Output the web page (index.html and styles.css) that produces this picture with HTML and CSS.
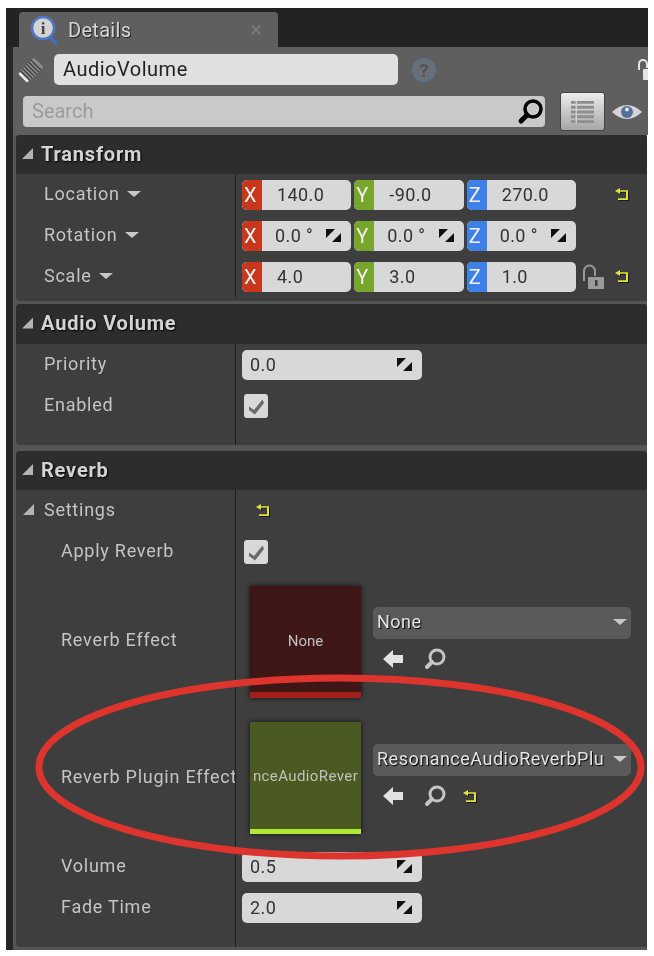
FILE: index.html
```html
<!DOCTYPE html>
<html>
    <head>
        <meta charset="UTF-8">
        <title>Details</title>
        <link rel="stylesheet" href="styles.css">
    </head>

    <body>
        <svg class="defs" width="0" height="0">
            <symbol id="reset" viewBox="0 0 14 13">
                <path d="M0 3 L5 0 V2.2 H13 V12 H3 V10.2 H11 V3.8 H5 V6 Z" fill="#000" opacity=".6" transform="translate(1 1)"/>
                <path d="M0 3 L5 0 V2.2 H13 V12 H3 V10.2 H11 V3.8 H5 V6 Z" fill="#e0e23c"/>
            </symbol>
            <symbol id="spin" viewBox="0 0 15 15">
                <path d="M0 1 H9 L0 10 Z M15 5 V14 H6 Z" fill="#111"/>
            </symbol>
            <symbol id="check" viewBox="0 0 24 24">
                <path d="M5 12.5 L10 16 L18.5 5.5 L20 9 L11 20.5 L5 16 Z" fill="#6a6a6a"/>
            </symbol>
            <symbol id="back" viewBox="0 0 22 20">
                <path d="M1 10 L11 1 V6 H21 V14 H11 V19 Z" fill="#e2e2e2"/>
            </symbol>
            <symbol id="find" viewBox="0 0 22 22">
                <circle cx="13" cy="9" r="7" fill="none" stroke="#c4c4c4" stroke-width="3"/>
                <path d="M8 14 L3 19" stroke="#c4c4c4" stroke-width="4" stroke-linecap="round"/>
            </symbol>
        </svg>

        <div class="panel">
            <div class="tabstrip">
                <div class="tab">
                    <svg class="tab_icon" viewBox="0 0 28 30">
                        <path d="M19 21 L26 28" stroke="#3f6fc0" stroke-width="3.5" stroke-linecap="round"/>
                        <circle cx="13" cy="13" r="11" fill="#d4d4d4" stroke="#4f78c4" stroke-width="2.5"/>
                        <text x="13" y="19" class="tab_icon_i">i</text>
                    </svg>
                    <span class="tab_title">Details</span>
                    <span class="tab_close">×</span>
                </div>
            </div>

            <div class="main">
                <div class="toolbar">
                    <div class="name_row">
                        <svg class="actor_icon" viewBox="0 0 28 28">
                            <g transform="rotate(-45 14 14)">
                                <rect x="3" y="7" width="22" height="14" rx="3" fill="#8a8a8a"/>
                                <path d="M6 7 V21 M9 7 V21 M12 7 V21 M15 7 V21 M18 7 V21 M21 7 V21" stroke="#3a3a3a" stroke-width="1.2"/>
                                <path d="M3.5 8 V20" stroke="#f0f0f0" stroke-width="2.5"/>
                            </g>
                        </svg>
                        <div class="name_input">AudioVolume</div>
                        <div class="help">?</div>
                        <svg class="top_lock" viewBox="0 0 16 24">
                            <path d="M2 12 V6 A4 4 0 0 1 10 6 V10" fill="none" stroke="#e4e4e4" stroke-width="2"/>
                            <rect x="6" y="11" width="10" height="11" rx="1" fill="#e4e4e4"/>
                        </svg>
                    </div>
                    <div class="search_row">
                        <div class="search">
                            <span class="search_text">Search</span>
                            <svg class="search_icon" viewBox="0 0 28 28">
                                <circle cx="16" cy="11" r="8" fill="none" stroke="#000" stroke-width="3.5"/>
                                <path d="M10 17 L4 23" stroke="#000" stroke-width="5" stroke-linecap="round"/>
                            </svg>
                        </div>
                        <div class="grid_btn">
                            <svg class="grid_icon" viewBox="0 0 24 24">
                                <path d="M0 2 H24 M0 7 H24 M0 12 H24 M0 17 H24 M0 22 H24" stroke="#8e8e8e" stroke-width="3"/>
                                <path d="M5.5 0 V24" stroke="#d0d0d0" stroke-width="1.5"/>
                            </svg>
                        </div>
                        <svg class="eye" viewBox="0 0 30 22">
                            <path d="M0 11 Q15 -3 30 11 Q15 25 0 11 Z" fill="#d4d4d4"/>
                            <circle cx="15" cy="11" r="6" fill="#56709c"/>
                            <circle cx="15" cy="8.5" r="2" fill="#dfe6f0"/>
                        </svg>
                    </div>
                </div>

                <div class="sections">
                    <div class="section section_transform">
                        <div class="section_head"><i class="corner"></i>Transform</div>
                        <div class="row">
                            <div class="name name_menu">Location<i class="caret"></i></div>
                            <div class="value">
                                <div class="vec">
                                    <div class="axis axis_x"><b>X</b><span class="num">140.0</span></div>
                                    <div class="axis axis_y"><b>Y</b><span class="num">-90.0</span></div>
                                    <div class="axis axis_z"><b>Z</b><span class="num">270.0</span></div>
                                </div>
                                <svg class="reset reset_vec"><use href="#reset"/></svg>
                            </div>
                        </div>
                        <div class="row">
                            <div class="name name_menu">Rotation<i class="caret"></i></div>
                            <div class="value">
                                <div class="vec">
                                    <div class="axis axis_x"><b>X</b><span class="num num_deg">0.0 °</span><svg class="spin"><use href="#spin"/></svg></div>
                                    <div class="axis axis_y"><b>Y</b><span class="num num_deg">0.0 °</span><svg class="spin"><use href="#spin"/></svg></div>
                                    <div class="axis axis_z"><b>Z</b><span class="num num_deg">0.0 °</span><svg class="spin"><use href="#spin"/></svg></div>
                                </div>
                            </div>
                        </div>
                        <div class="row">
                            <div class="name name_menu">Scale<i class="caret"></i></div>
                            <div class="value">
                                <div class="vec">
                                    <div class="axis axis_x"><b>X</b><span class="num">4.0</span></div>
                                    <div class="axis axis_y"><b>Y</b><span class="num">3.0</span></div>
                                    <div class="axis axis_z"><b>Z</b><span class="num">1.0</span></div>
                                </div>
                                <svg class="scale_lock" viewBox="0 0 22 26">
                                    <path d="M2 17 V7 A5.5 5.5 0 0 1 13 7 V12" fill="none" stroke="#9a9a9a" stroke-width="2"/>
                                    <rect x="6" y="13" width="16" height="12" rx="1" fill="#9a9a9a"/>
                                    <rect x="13" y="16" width="2.5" height="6" fill="#3e3e3e"/>
                                </svg>
                                <svg class="reset reset_scale"><use href="#reset"/></svg>
                            </div>
                        </div>
                        <div class="section_end"></div>
                    </div>

                    <div class="section section_audio">
                        <div class="section_head"><i class="corner"></i>Audio Volume</div>
                        <div class="row">
                            <div class="name">Priority</div>
                            <div class="value"><div class="single">0.0<svg class="spin"><use href="#spin"/></svg></div></div>
                        </div>
                        <div class="row">
                            <div class="name">Enabled</div>
                            <div class="value"><svg class="check"><use href="#check"/></svg></div>
                        </div>
                        <div class="section_end section_end_tall"></div>
                    </div>

                    <div class="section section_last">
                        <div class="section_head"><i class="corner"></i>Reverb</div>
                        <div class="row">
                            <div class="name"><i class="corner corner_small"></i>Settings</div>
                            <div class="value"><svg class="reset reset_settings"><use href="#reset"/></svg></div>
                        </div>
                        <div class="row">
                            <div class="name name_sub">Apply Reverb</div>
                            <div class="value"><svg class="check"><use href="#check"/></svg></div>
                        </div>
                        <div class="row row_asset">
                            <div class="name name_sub">Reverb Effect</div>
                            <div class="value">
                                <div class="thumb thumb_none"><span>None</span></div>
                                <div class="asset_side">
                                    <div class="combo"><span>None</span><i class="caret"></i></div>
                                    <div class="asset_tools">
                                        <svg class="tool_back"><use href="#back"/></svg>
                                        <svg class="tool_find"><use href="#find"/></svg>
                                    </div>
                                </div>
                            </div>
                        </div>
                        <div class="row row_asset row_asset_tall">
                            <div class="name name_sub">Reverb Plugin Effect</div>
                            <div class="value">
                                <div class="thumb thumb_plugin"><span>nceAudioRever</span></div>
                                <div class="asset_side">
                                    <div class="combo"><span>ResonanceAudioReverbPlu</span><i class="caret"></i></div>
                                    <div class="asset_tools">
                                        <svg class="tool_back"><use href="#back"/></svg>
                                        <svg class="tool_find"><use href="#find"/></svg>
                                        <svg class="reset reset_tool"><use href="#reset"/></svg>
                                    </div>
                                </div>
                            </div>
                        </div>
                        <div class="row">
                            <div class="name name_sub">Volume</div>
                            <div class="value"><div class="single">0.5<svg class="spin"><use href="#spin"/></svg></div></div>
                        </div>
                        <div class="row">
                            <div class="name name_sub">Fade Time</div>
                            <div class="value"><div class="single">2.0<svg class="spin"><use href="#spin"/></svg></div></div>
                        </div>
                        <div class="section_end section_end_tall"></div>
                    </div>
                </div>
            </div>
        </div>

        <!-- red marker drawn over the screenshot -->
        <svg class="marker" width="654" height="956">
            <ellipse cx="340" cy="767" rx="301" ry="89" fill="none" stroke="#dd352e" stroke-width="7"/>
        </svg>
    </body>
</html>
```

FILE: styles.css
```css
* {
    box-sizing: border-box;
}
body {
    margin: 0;
    background: #fff;
    font-family: Roboto, 'Liberation Sans', sans-serif;
}
.defs {
    position: absolute;
}
.panel {
    width: 642px;
    height: 942px;
    margin: 8px 0 0 6px;
    overflow: hidden;
    filter: blur(0.5px);
}
.tabstrip {
    height: 39px;
    padding: 4px 0 0 13px;
    background: #232323;
}
.tab {
    display: flex;
    align-items: center;
    width: 259px;
    height: 35px;
    padding: 0 16px 0 11px;
    background: #5f5f5f;
    border-radius: 4px 4px 0 0;
}
.tab_icon {
    width: 28px;
    height: 30px;
}
.tab_icon_i {
    font-family: 'Liberation Serif', serif;
    font-size: 17px;
    font-weight: bold;
    fill: #444;
    text-anchor: middle;
}
.tab_title {
    margin-left: 10px;
    font-size: 20px;
    letter-spacing: 0.3px;
    color: #d6d6d6;
    text-shadow: 1px 1px 1px #222;
}
.tab_close {
    margin-left: auto;
    font-size: 22px;
    color: #7c7c7c;
}
.main {
    border-left: 7px solid #262626;
}
.toolbar {
    height: 88px;
    padding-top: 7px;
    background: #5f5f5f;
}
.name_row {
    display: flex;
    align-items: center;
    height: 31px;
}
.actor_icon {
    flex: none;
    width: 28px;
    height: 28px;
    margin-left: 4px;
}
.name_input {
    flex: none;
    width: 344px;
    height: 31px;
    margin-left: 9px;
    padding-left: 9px;
    font-size: 20px;
    letter-spacing: 0.5px;
    line-height: 31px;
    color: #222;
    background: #e0e0e0;
    border-radius: 5px;
}
.help {
    flex: none;
    width: 24px;
    height: 24px;
    margin-left: 14px;
    font-size: 19px;
    font-weight: bold;
    line-height: 21px;
    text-align: center;
    color: #4f5358;
    background: #6b6f75;
    border: 2px solid #5e7189;
    border-radius: 50%;
}
.top_lock {
    flex: none;
    width: 16px;
    height: 24px;
    margin-left: 201px;
}
.search_row {
    display: flex;
    align-items: center;
    height: 39px;
    margin-top: 7px;
    padding-left: 10px;
}
.search {
    display: flex;
    align-items: center;
    justify-content: space-between;
    width: 522px;
    height: 31px;
    padding-left: 9px;
    font-size: 20px;
    color: #9c9c9c;
    background: #c9c9c9;
    border-radius: 4px;
}
.search_text {
    padding-bottom: 2px;
}
.search_icon {
    width: 28px;
    height: 28px;
}
.grid_btn {
    display: flex;
    align-items: center;
    justify-content: center;
    width: 45px;
    height: 39px;
    margin-left: 15px;
    background: linear-gradient(#ececec, #a6a6a6);
    border: 1px solid #444;
    border-radius: 3px;
}
.grid_icon {
    width: 23px;
    height: 24px;
}
.eye {
    width: 30px;
    height: 22px;
    margin-left: 7px;
}
.sections {
    margin-right: 1px;
    padding: 0 0 3px 3px;
    background: #555;
}
.section {
    margin-bottom: 6px;
    background: #3e3e3e;
    border-radius: 4px 4px 0 4px;
}
.section_transform {
    margin-bottom: 3px;
}
.section_last {
    margin-bottom: 0;
}
.section_head {
    display: flex;
    align-items: center;
    height: 39px;
    padding-bottom: 2px;
    font-size: 20px;
    font-weight: bold;
    letter-spacing: 0.8px;
    color: #d4d4d4;
    text-shadow: 1px 1px 2px #000;
    background: #2d2d2d;
    border-radius: 4px 4px 0 0;
}
.section_audio .section_head {
    height: 40px;
}
.corner {
    flex: none;
    width: 11px;
    height: 11px;
    margin: 0 8px 0 6px;
    background: #b4b4b4;
    clip-path: polygon(100% 0, 100% 100%, 0 100%);
}
.corner_small {
    margin: 0 10px 0 7px;
}
.section_end {
    height: 4px;
}
.section_end_tall {
    height: 19px;
    margin-left: 219px;
    border-left: 1px solid #1e1e1e;
}
.row {
    display: flex;
    height: 41px;
}
.row_asset {
    height: 136px;
}
.row_asset_tall {
    height: 138px;
}
.name {
    display: flex;
    align-items: center;
    flex: none;
    width: 219px;
    padding: 0 0 2px 28px;
    font-size: 18px;
    letter-spacing: 0.75px;
    white-space: nowrap;
    color: #c4c4c4;
}
.name:has(.corner_small) {
    padding-left: 0;
}
.name_sub {
    padding-left: 45px;
}
.caret {
    flex: none;
    width: 0;
    height: 0;
    margin-left: 7px;
    border-left: 7px solid transparent;
    border-right: 7px solid transparent;
    border-top: 6px solid #c8c8c8;
}
.value {
    display: flex;
    align-items: center;
    flex: 1;
    padding-left: 6px;
    border-left: 1px solid #1e1e1e;
}
.vec {
    display: flex;
    gap: 3px;
    width: 334px;
}
.axis {
    display: flex;
    flex: 1;
    height: 30px;
    border-radius: 5px;
    overflow: hidden;
    align-items: center;
    font-size: 18px;
    letter-spacing: 0.4px;
    color: #333;
    background: #d8d8d8;
}
.axis b {
    flex: none;
    width: 20px;
    height: 100%;
    padding-left: 2px;
    font-size: 20px;
    font-weight: normal;
    line-height: 30px;
    color: #f2f2f2;
    border-radius: 5px 0 0 5px;
}
.axis_x b {
    background: #c8361b;
}
.axis_y b {
    background: #78a52c;
}
.axis_z b {
    background: #3d80e8;
}
.num {
    margin-left: 15px;
}
.num_deg {
    margin-left: 13px;
}
.spin {
    flex: none;
    width: 15px;
    height: 15px;
    margin-left: auto;
    margin-right: 10px;
}
.single {
    display: flex;
    align-items: center;
    width: 180px;
    height: 30px;
    padding-left: 8px;
    font-size: 18px;
    letter-spacing: 0.4px;
    color: #333;
    background: #d8d8d8;
    border-radius: 5px;
}
.check {
    width: 24px;
    height: 24px;
    margin-left: 2px;
    background: #d8d8d8;
    border-radius: 3px;
}
.reset {
    flex: none;
    width: 14px;
    height: 13px;
}
.reset_vec {
    margin-left: 39px;
}
.reset_scale {
    margin-left: 11px;
}
.reset_settings {
    margin-left: 14px;
}
.reset_tool {
    margin-left: 17px;
}
.scale_lock {
    flex: none;
    width: 22px;
    height: 26px;
    margin-left: 6px;
}
.thumb {
    display: flex;
    flex: none;
    align-items: center;
    justify-content: center;
    width: 111px;
    height: 112px;
    margin-left: 8px;
    white-space: nowrap;
    font-size: 15px;
    color: #c0c0c0;
    box-shadow: 0 0 5px #111;
}
.thumb_none {
    margin-top: 4px;
    padding-top: 4px;
    background: #3d1615;
    border-bottom: 6px solid #a3201a;
}
.thumb_plugin {
    margin-top: 2px;
    padding-top: 1px;
    letter-spacing: 0.4px;
    background: #4b5a20;
    border-bottom: 5px solid #aeea33;
}
.asset_side {
    flex: none;
    width: 258px;
    margin-left: 12px;
}
.combo {
    display: flex;
    align-items: center;
    justify-content: space-between;
    height: 32px;
    padding: 0 4px 2px;
    white-space: nowrap;
    font-size: 18px;
    letter-spacing: 0.5px;
    color: #e4e4e4;
    text-shadow: 1px 1px 1px #000;
    background: #5a5a5a;
    border-radius: 5px;
}
.asset_tools {
    display: flex;
    align-items: center;
    height: 30px;
    margin-top: 5px;
    padding: 1px 0 0 9px;
}
.tool_back {
    width: 22px;
    height: 20px;
}
.tool_find {
    width: 22px;
    height: 22px;
    margin-left: 20px;
}
.marker {
    position: absolute;
    top: 0;
    left: 0;
}
```
